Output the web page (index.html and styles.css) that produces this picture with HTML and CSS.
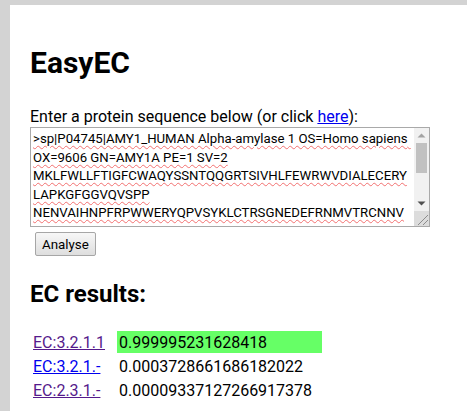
FILE: index.html
```html
<!DOCTYPE html>
<html lang="en">
<head>
<meta charset="utf-8">
<title>EasyEC</title>
<link rel="stylesheet" href="styles.css">
</head>
<body>
<main class="page">
  <h1 class="title">EasyEC</h1>
  <p class="intro">Enter a protein sequence below (or click <a class="link" href="#example">here</a>):</p>
  <form class="query">
    <div class="seq-box">
      <textarea class="seq" spellcheck="false">&gt;sp|P04745|AMY1_HUMAN Alpha-amylase 1 OS=Homo sapiens OX=9606 GN=AMY1A PE=1 SV=2
MKLFWLLFTIGFCWAQYSSNTQQGRTSIVHLFEWRWVDIALECERYLAPKGFGGVQVSPP
NENVAIHNPFRPWWERYQPVSYKLCTRSGNEDEFRNMVTRCNNVGVRIYVDAVINHMCGN
AVSAGTSSTCGSYFNPGSRDFPAIPYSGWDFNDGKCKTGSGDIENYNDATQVRDCRLTGL
LDLALEKDYVRSKIAEYMNHLIDIGVAGFRLDASKHMWPGDIKAILDKLHNLNSNWFPEG</textarea>
      <div class="vscroll" aria-hidden="true">
        <span class="sb-btn">
          <svg width="15" height="15" viewBox="0 0 15 15"><path d="M3.5 9.5 L7.5 5.5 L11.5 9.5 Z" fill="#a3a3a3"/></svg>
        </span>
        <span class="sb-track"><span class="sb-thumb"></span></span>
        <span class="sb-btn">
          <svg width="15" height="15" viewBox="0 0 15 15"><path d="M3.5 5.5 L7.5 9.5 L11.5 5.5 Z" fill="#505050"/></svg>
        </span>
      </div>
      <div class="resizer" aria-hidden="true">
        <svg width="15" height="15" viewBox="0 0 15 15">
          <path d="M4 14 L14 4 M9 14 L14 9" stroke="#8c8c8c" stroke-width="1" fill="none"/>
        </svg>
      </div>
    </div>
    <button class="analyse" type="button">Analyse</button>
  </form>
  <h2 class="subtitle">EC results:</h2>
  <table class="results">
    <tr>
      <td><a class="link visited" href="#ec3211">EC:3.2.1.1</a></td>
      <td class="score top">0.999995231628418</td>
    </tr>
    <tr>
      <td><a class="link" href="#ec321">EC:3.2.1.-</a></td>
      <td class="score">0.0003728661686182022</td>
    </tr>
    <tr>
      <td><a class="link visited" href="#ec231">EC:2.3.1.-</a></td>
      <td class="score">0.00009337127266917378</td>
    </tr>
  </table>
</main>
</body>
</html>
```

FILE: styles.css
```css
html, body {
  margin: 0;
  padding: 0;
}
body {
  background: #d3d3d3;
  font-family: Roboto, "Liberation Sans", sans-serif;
  font-size: 16px;
  color: #000;
}
.page {
  background: #fff;
  margin: 5px 0 0 10px;
  padding: 20px 20px 30px 20px;
  min-height: 400px;
}
.title {
  font-size: 30px;
  font-weight: 700;
  margin: 20px 0 0 0;
}
.intro {
  margin: 27px 0 1px 0;
}
.link {
  color: #0000ee;
}
.link.visited {
  color: #551a8b;
}
.query {
  display: flex;
  flex-direction: column;
  align-items: flex-start;
  gap: 5px;
}
.seq-box {
  position: relative;
  width: 400px;
  height: 100px;
}
.seq {
  display: block;
  box-sizing: border-box;
  width: 100%;
  height: 100%;
  border: 1px solid #a9a9a9;
  padding: 2px 19px 2px 2px;
  font-family: Roboto, "Liberation Sans", sans-serif;
  font-size: 13.2px;
  line-height: 18.5px;
  color: #000;
  resize: none;
  overflow: hidden;
  margin: 0;
  text-decoration: underline wavy #f27070;
  text-decoration-thickness: 1px;
  text-underline-offset: 2px;
}
.vscroll {
  position: absolute;
  top: 1px;
  right: 1px;
  bottom: 16px;
  width: 15px;
  background: #f1f1f1;
  display: flex;
  flex-direction: column;
}
.sb-btn {
  display: block;
  height: 15px;
  flex: none;
}
.sb-btn svg {
  display: block;
}
.sb-track {
  flex: 1;
  display: block;
}
.sb-thumb {
  display: block;
  height: 30px;
  margin: 0 2px;
  background: #c1c1c1;
}
.resizer {
  position: absolute;
  right: 1px;
  bottom: 1px;
  width: 15px;
  height: 15px;
  background: #dcdcdc;
}
.resizer svg {
  display: block;
}
.analyse {
  margin-left: 5px;
  font-family: Roboto, "Liberation Sans", sans-serif;
  font-size: 13.33px;
  height: 24px;
  padding: 1px 6px;
  background: linear-gradient(#f7f7f7, #dedede);
  border: 1px solid #a6a6a6;
  border-radius: 2px;
  color: #000;
}
.subtitle {
  font-size: 24px;
  font-weight: 700;
  margin: 24px 0 0 0;
}
.results {
  margin-top: 21px;
  border-spacing: 2px;
}
.results td {
  padding: 2px 10px 1px 1px;
  line-height: 19px;
}
.results td.score {
  padding-left: 2px;
}
.score.top {
  background: #66ff66;
}
```
